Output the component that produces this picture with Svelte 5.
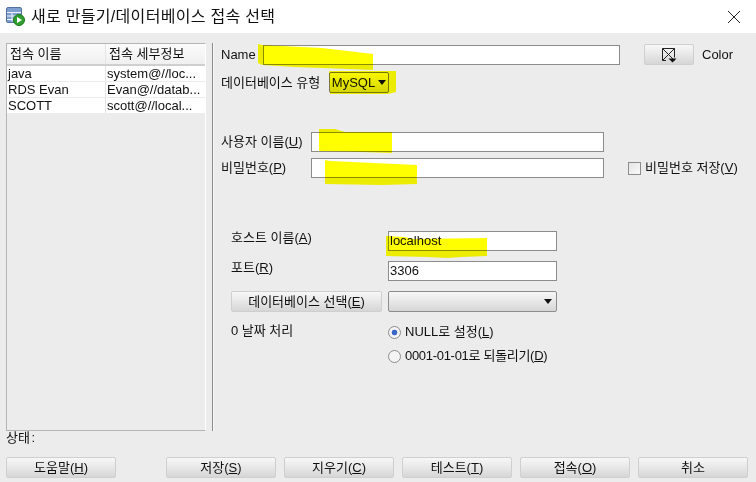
<script lang="ts">
	const connections = [
		{ name: 'java', detail: 'system@//loc...' },
		{ name: 'RDS Evan', detail: 'Evan@//datab...' },
		{ name: 'SCOTT', detail: 'scott@//local...' }
	];
</script>

<div class="dialog">
	<header class="titlebar">
		<svg class="app-icon" width="19" height="19" viewBox="0 0 19 19">
			<rect x="0.5" y="0.5" width="15" height="15" rx="1.5" fill="#7f9fd0" stroke="#55719f" />
			<path d="M1 5.500h14M1 9h14M1 12.500h14M6 5.500v9" stroke="#eef2f8" fill="none" />
			<circle cx="13" cy="13" r="5.500" fill="#2f9e2f" stroke="#1d7a1d" />
			<path d="M11 10v6l5-3z" fill="#fff" />
		</svg>
		<h1>새로 만들기/데이터베이스 접속 선택</h1>
		<svg class="close" width="14" height="14" viewBox="0 0 14 14">
			<path d="M1 1l12 12M13 1L1 13" stroke="#222" fill="none" />
		</svg>
	</header>

	<div class="content">
		<aside class="list">
			<div class="row head">
				<div class="cell first">접속 이름</div>
				<div class="cell">접속 세부정보</div>
			</div>
			{#each connections as c}
				<div class="row item">
					<div class="cell first">{c.name}</div>
					<div class="cell">{c.detail}</div>
				</div>
			{/each}
		</aside>

		<div class="divider"></div>

		<section class="form">
			<div class="line name-line">
				<span class="lbl name-lbl">Name</span>
				<div class="input name-input"></div>
				<button class="btn color-btn">
					<svg width="16" height="16" viewBox="0 0 16 16">
						<path d="M1.500 1.500h12v9M5 13.500h-3.500v-12M1.500 1.500l12 12M13.500 1.500l-12 12" stroke="#222" fill="none" />
						<path d="M7.500 11.500h8l-4 4z" fill="#111" />
					</svg>
				</button>
				<span class="color-lbl">Color</span>
			</div>

			<div class="line type-line">
				<span class="lbl type-lbl">데이터베이스 유형</span>
				<button class="btn type-combo">MySQL<i class="caret"></i></button>
			</div>

			<div class="line user-line">
				<span class="lbl user-lbl">사용자 이름(<u>U</u>)</span>
				<div class="input cred-input"></div>
			</div>

			<div class="line pass-line">
				<span class="lbl user-lbl">비밀번호(<u>P</u>)</span>
				<div class="input cred-input"></div>
				<i class="check"></i>
				<span>비밀번호 저장(<u>V</u>)</span>
			</div>

			<div class="details">
				<span class="host-lbl">호스트 이름(<u>A</u>)</span>
				<div class="input">localhost</div>

				<span class="port-lbl">포트(<u>R</u>)</span>
				<div class="input">3306</div>

				<button class="btn">데이터베이스 선택(<u>E</u>)</button>
				<button class="btn db-combo"><i class="caret"></i></button>

				<span class="zero-lbl">0 날짜 처리</span>
				<div class="radios">
					<div class="radio-line"><i class="radio on"></i>NULL로 설정(<u>L</u>)</div>
					<div class="radio-line tight"><i class="radio"></i>0001-01-01로 되돌리기(<u>D</u>)</div>
				</div>
			</div>
		</section>
	</div>

	<div class="status">상태 :</div>

	<footer class="actions">
		<button class="btn help">도움말(<u>H</u>)</button>
		<button class="btn">저장(<u>S</u>)</button>
		<button class="btn">지우기(<u>C</u>)</button>
		<button class="btn">테스트(<u>T</u>)</button>
		<button class="btn">접속(<u>O</u>)</button>
		<button class="btn">취소</button>
	</footer>

	<!-- marker strokes drawn over the screenshot -->
	<svg class="marker" width="756" height="482" viewBox="0 0 756 482">
		<path d="M258 44l4 1 60 3 51 6v16l-50-2-28-1-33-2-4-2z" />
		<path d="M329 71h67v21l-8 2h-58z" />
		<path d="M319 129h16l10 3h47v21l-30-1-43-1z" />
		<path d="M325 160l5 1 87 4v19l-35 1-57-1z" />
		<path d="M386 236l18 1 10 2 73-1v18l-25 1-15 1-20-1-41-1z" />
	</svg>
</div>

<style>
	:global(body) {
		margin: 0;
		background: #ececec;
	}
	.dialog {
		position: relative;
		width: 756px;
		height: 482px;
		overflow: hidden;
		background: #ececec;
		color: #111;
		font-family: 'Liberation Sans', 'Noto Sans CJK KR', sans-serif;
		font-size: 13px;
		line-height: 14px;
	}
	u {
		text-underline-offset: 1px;
	}

	.titlebar {
		display: flex;
		align-items: center;
		height: 33px;
		padding: 0 0 0 6px;
		background: #fff;
	}
	.app-icon {
		margin-right: 6px;
	}
	h1 {
		margin: 0;
		font-size: 16px;
		font-weight: 400;
		letter-spacing: 0.3px;
		color: #111;
	}
	.close {
		margin-left: auto;
		margin-right: 15px;
	}

	.content {
		display: flex;
		height: 388px;
		margin-top: 10px;
		padding-left: 6px;
	}
	.list {
		box-sizing: border-box;
		width: 200px;
		border: 1px solid #b5b5b5;
		border-right-color: #fff;
		background: #ececec;
	}
	.row {
		display: flex;
	}
	.cell {
		flex: 1;
		padding-left: 1px;
		white-space: nowrap;
		overflow: hidden;
	}
	.cell.first {
		flex: none;
		box-sizing: border-box;
		width: 99px;
		border-right: 1px solid #e4e4e4;
	}
	.head {
		height: 20px;
		align-items: center;
		background: linear-gradient(#fbfbfb, #f0f0f0);
		border-bottom: 2px solid #cfcfcf;
	}
	.head .cell {
		line-height: 20px;
		padding-left: 3px;
	}
	.item {
		height: 15px;
		line-height: 15px;
		background: #fff;
		border-bottom: 1px solid #ececec;
	}

	.divider {
		box-sizing: border-box;
		width: 2px;
		margin-left: 6px;
		background: #8a8a8a;
		border-right: 1px solid #fafafa;
	}

	.form {
		flex: 1;
		padding-left: 7px;
	}
	.line {
		display: flex;
		align-items: center;
	}
	.input {
		box-sizing: border-box;
		height: 20px;
		padding-left: 1px;
		line-height: 18px;
		background: #fff;
		border: 1px solid #8c8c8c;
	}
	.btn {
		box-sizing: border-box;
		height: 21px;
		padding: 0;
		font: inherit;
		color: inherit;
		background: linear-gradient(#f7f7f7, #e9e9e9 45%, #d6d6d6);
		border: 1px solid #cfcfcf;
		border-radius: 2px;
	}

	.name-line {
		padding-top: 1px;
	}
	.name-lbl {
		width: 42px;
	}
	.name-input {
		width: 357px;
	}
	.color-btn {
		display: flex;
		align-items: center;
		justify-content: center;
		width: 50px;
		margin-left: 24px;
	}
	.color-lbl {
		margin-left: 8px;
	}

	.type-line {
		margin-top: 7px;
	}
	.type-lbl {
		width: 108px;
	}
	.type-combo {
		display: flex;
		align-items: center;
		justify-content: center;
		gap: 3px;
		width: 60px;
		border-color: #777;
	}
	.caret {
		display: inline-block;
		border: 4px solid transparent;
		border-top: 5px solid #111;
		border-bottom: 0;
	}

	.user-line {
		margin-top: 39px;
	}
	.user-lbl {
		width: 90px;
	}
	.cred-input {
		width: 293px;
	}
	.pass-line {
		margin-top: 6px;
	}
	.check {
		box-sizing: border-box;
		width: 13px;
		height: 13px;
		margin: 0 4px 0 24px;
		border: 1px solid #8c8c8c;
		background: linear-gradient(135deg, #e4e4e4, #fafafa);
	}

	.details {
		display: grid;
		grid-template-columns: 151px 169px;
		column-gap: 6px;
		margin: 53px 0 0 10px;
		width: 326px;
		row-gap: 10px;
	}
	.db-combo {
		display: flex;
		align-items: center;
		justify-content: flex-end;
		padding-right: 4px;
		border-color: #8c8c8c;
	}
	.zero-lbl {
		margin-top: 2px;
	}
	.radios {
		display: flex;
		flex-direction: column;
		gap: 10px;
		margin-top: 3px;
	}
	.radio-line {
		display: flex;
		align-items: center;
		white-space: nowrap;
	}
	.radio-line.tight {
		letter-spacing: -0.3px;
	}
	.radio {
		box-sizing: border-box;
		width: 13px;
		height: 13px;
		margin-right: 4px;
		border: 1px solid #8c8c8c;
		border-radius: 50%;
		background: #f4f4f4;
	}
	.radio.on {
		background: radial-gradient(circle, #3a66c8 0 2.500px, #f4f4f4 3.200px);
	}

	.status {
		margin: 0 0 0 6px;
		height: 14px;
		line-height: 14px;
		word-spacing: -2px;
	}

	.actions {
		display: flex;
		gap: 8px;
		margin-top: 12px;
		padding-left: 6px;
	}
	.actions .btn {
		width: 110px;
	}
	.actions .help {
		margin-right: 42px;
	}

	.marker {
		position: absolute;
		inset: 0;
		pointer-events: none;
		mix-blend-mode: multiply;
	}
	.marker path {
		fill: #ffff00;
	}
</style>
